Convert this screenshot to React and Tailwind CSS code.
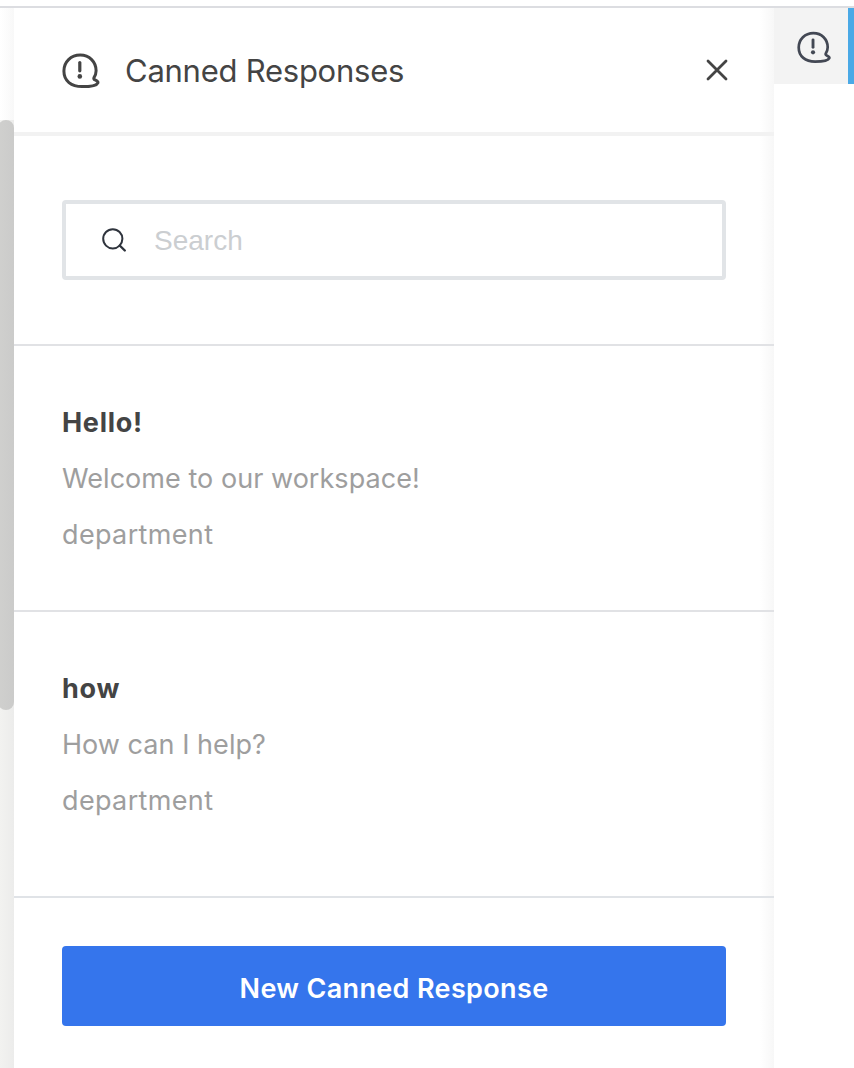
function CannedIcon({ className }) {
  return (
    <svg viewBox="0 0 40 36" fill="none" className={className}>
      <path
        d="M32 24.6C33.4 22.4 34.1 20.3 34.1 17.8C34.1 9 27.5 2.1 18.2 2.1C8.9 2.1 1.9 9 1.9 18C1.9 28 9.3 33.6 20.1 33.6C28.5 33.6 34.8 32.4 35.9 29.8C36.5 28.3 34.6 27.6 33.1 26.9C32 26.4 31.4 25.6 32 24.6Z"
        stroke="currentColor"
        strokeWidth="3"
        strokeLinejoin="round"
      />
      <path d="M17.8 9.5V17.8" stroke="currentColor" strokeWidth="3.2" strokeLinecap="round" />
      <circle cx="17.8" cy="23.4" r="2.3" fill="currentColor" />
    </svg>
  );
}

const responses = [
  { title: "Hello!", text: "Welcome to our workspace!", scope: "department" },
  { title: "how", text: "How can I help?", scope: "department" },
];

export default function App() {
  return (
    <div className="flex h-[1068px] w-[854px] flex-col overflow-hidden bg-white font-['Inter',sans-serif]">
      <div className="h-2 shrink-0 border-b-2 border-[#dcdde1]" />
      <div className="flex min-h-0 flex-1">
        <div className="flex w-3.5 shrink-0 flex-col bg-gradient-to-r from-[#f2f2f0] to-[#ececeb]">
          <div className="h-28 bg-gradient-to-r from-white to-[#f8f8f8]" />
          <div className="-ml-0.5 h-[590px] rounded-[8px] bg-gradient-to-r from-[#d0d0ce] to-[#cbcbca]" />
        </div>

        <section className="flex w-[760px] shrink-0 flex-col bg-[linear-gradient(to_right,transparent_746px,#f7f7f7_760px)]">
          <header className="flex h-32 shrink-0 items-center border-b-4 border-[#f2f2f2] pt-0.5 pr-[45px] pl-12 text-[#444444]">
            <CannedIcon className="h-9 w-10 shrink-0" />
            <h1 className="ml-[23px] flex-1 text-[31px] leading-10 tracking-[-0.25px]">Canned Responses</h1>
            <svg viewBox="0 0 24 24" fill="none" className="h-6 w-6">
              <path d="M3 2L21 20M21 2L3 20" stroke="currentColor" strokeWidth="2.8" strokeLinecap="round" />
            </svg>
          </header>

          <div className="h-[210px] shrink-0 border-b-2 border-[#e1e2e5] px-12 pt-16">
            <label className="flex h-20 items-center rounded-[4px] border-4 border-[#e1e4e7] bg-white pl-9">
              <svg viewBox="0 0 26 26" fill="none" className="h-[26px] w-[26px] shrink-0">
                <circle cx="10.8" cy="11.8" r="9.6" stroke="#2f343d" strokeWidth="2" />
                <path d="M17.7 18.5L22.8 23.5" stroke="#2f343d" strokeWidth="2.4" strokeLinecap="round" />
              </svg>
              <input
                type="text"
                placeholder="Search"
                className="ml-[26px] min-w-0 flex-1 bg-transparent pt-0.5 font-['Liberation_Sans',sans-serif] text-[28px] leading-10 outline-none placeholder:text-[#cbced1]"
              />
            </label>
          </div>

          <div className="flex h-[552px] shrink-0 flex-col border-b-2 border-[#e0e3e7] text-[27px] leading-10">
            {responses.map((item) => (
              <article
                key={item.title}
                className="flex h-[266px] flex-col gap-4 border-b-2 border-[#e1e2e5] px-12 pt-[57px] last:border-b-0"
              >
                <h2 className="font-bold tracking-[0.7px] text-[#444444]">{item.title}</h2>
                <p className="tracking-[0.04px] text-[#9e9e9e]">{item.text}</p>
                <p className="tracking-[0.35px] text-[#9e9e9e]">{item.scope}</p>
              </article>
            ))}
          </div>

          <footer className="px-12 pt-12">
            <button className="h-20 w-full rounded-[4px] bg-[#3575ec] pt-1.5 text-[27px] font-semibold tracking-[0.35px] text-white">
              New Canned Response
            </button>
          </footer>
        </section>

        <aside className="w-20 bg-white">
          <button className="flex h-[76px] w-full items-center border-r-6 border-[#4aa9e6] bg-[#f3f3f3] pt-0.5 pl-[23px] text-[#434854]">
            <CannedIcon className="h-[33px] w-[36px]" />
          </button>
        </aside>
      </div>
    </div>
  );
}
